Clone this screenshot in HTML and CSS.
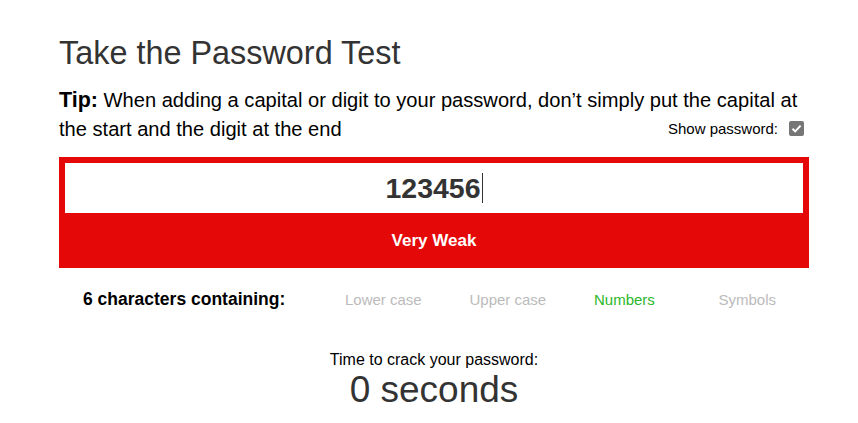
FILE: index.html
```html
<!DOCTYPE html>
<html>
<head>
<meta charset="utf-8">
<link rel="stylesheet" href="styles.css">
</head>
<body>
<div class="wrap">
  <h1 class="title">Take the Password Test</h1>
  <p class="tip"><b>Tip:</b> When adding a capital or digit to your password, don’t simply put the capital at the start and the digit at the end<span class="show"><span>Show password:</span><span class="cb"><svg width="15" height="15" viewBox="0 0 15 15"><rect x="0" y="0" width="15" height="15" rx="2" fill="#767676"/><path d="M3.5 7.8 L6.2 10.4 L11.6 4.6" fill="none" stroke="#fff" stroke-width="2"/></svg></span></span></p>
  <div class="meter">
    <div class="field"><span class="pw">123456</span><span class="caret"></span></div>
    <div class="rating">Very Weak</div>
  </div>
  <div class="contains">
    <div class="label">6 characters containing:</div>
    <div class="item">Lower case</div>
    <div class="item">Upper case</div>
    <div class="item on">Numbers</div>
    <div class="item last">Symbols</div>
  </div>
  <div class="crack">
    <div class="ctitle">Time to crack your password:</div>
    <div class="ctime">0 seconds</div>
  </div>
</div>
</body>
</html>
```
FILE: styles.css
```css
html, body { margin: 0; padding: 0; background: #fff; }
body { font-family: "Liberation Sans", Arial, sans-serif; color: #000; }
.wrap { width: 750px; margin-left: 59px; padding-top: 33px; }
.title { margin: 0; font-size: 32.4px; font-weight: normal; color: #333; line-height: 40px; }
.tip { margin: 13px 0 0; font-size: 20.1px; line-height: 29px; color: #000; }
.tip b { font-weight: bold; font-size: 21.5px; }
.show { float: right; display: flex; align-items: center; gap: 11px; margin-top: 5px; padding-right: 5px; font-size: 15px; line-height: 17px; height: 17px; }
.cb { display: flex; }
.meter { margin-top: 13px; background: #e40808; padding: 6px 6px 0; height: 105px; }
.field { background: #fff; height: 50px; display: flex; justify-content: center; align-items: center; }
.pw { font-size: 28.5px; font-weight: bold; color: #333; }
.caret { width: 1px; height: 30px; background: #333; margin-left: 1px; }
.rating { height: 55px; display: flex; justify-content: center; align-items: center; color: #fff; font-weight: bold; font-size: 17px; }
.contains { display: flex; align-items: center; margin-top: 19px; height: 24px; }
.label { flex: none; box-sizing: border-box; width: 286px; padding-left: 24px; font-weight: bold; font-size: 17.5px; }
.item { flex: none; width: 124.5px; font-size: 15px; color: #bbb; }
.item.last { width: auto; }
.item.on { color: #2ab72a; }
.crack { text-align: center; margin-top: 39px; }
.ctitle { font-size: 16px; line-height: 20px; }
.ctime { font-size: 37px; line-height: 40px; color: #333; }
```
